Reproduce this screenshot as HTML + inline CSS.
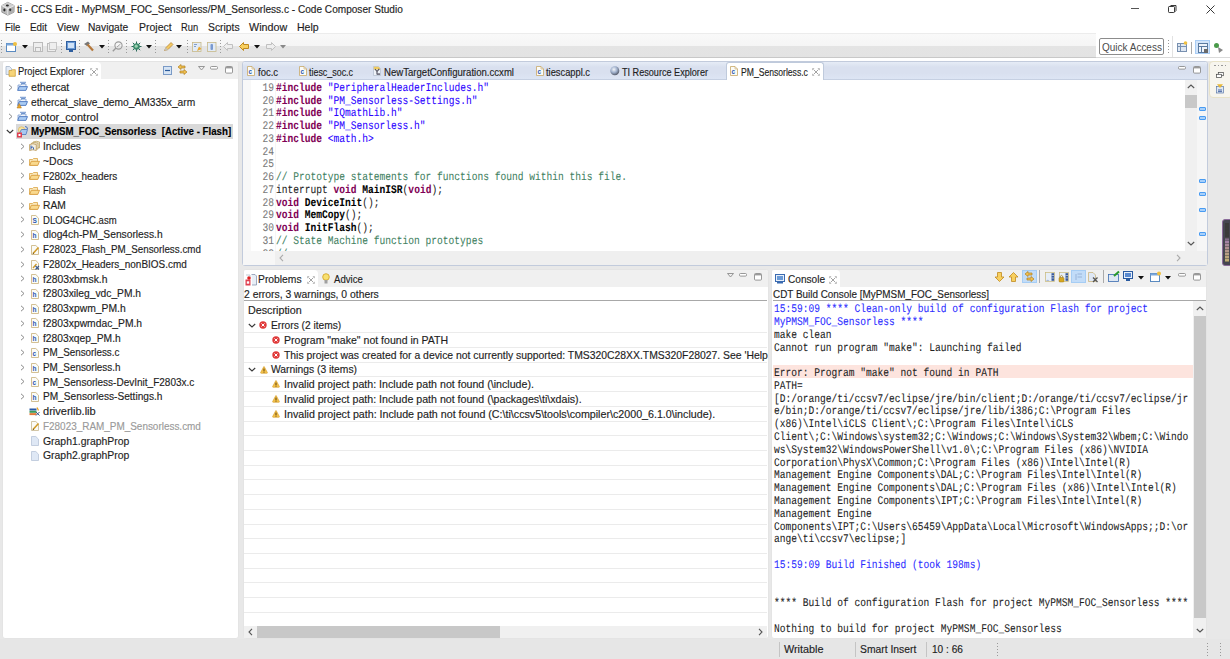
<!DOCTYPE html><html><head><meta charset="utf-8"><style>
*{margin:0;padding:0;box-sizing:border-box}
html,body{width:1230px;height:659px;overflow:hidden;background:#e8e8e8;font-family:"Liberation Sans",sans-serif;font-size:10.5px;color:#1e1e1e}
.a{position:absolute}
.t{position:absolute;white-space:pre;line-height:14px;-webkit-text-stroke:0.15px currentColor}
.m{position:absolute;white-space:pre;line-height:13px;font-family:"Liberation Mono",monospace;font-size:9.6px;color:#222;transform:scale(0.9994,1.22);transform-origin:0 9.06px;-webkit-text-stroke:0.06px currentColor;text-rendering:geometricPrecision}
.kw{color:#7f0055;font-weight:bold}
.st{color:#2a00ff}
.cm{color:#3f7f5f}
.fn{font-weight:bold;color:#000}
.bl{color:#1a1aff}
svg{position:absolute;overflow:visible}
</style></head><body><div class="a" style="left:0px;top:0px;width:1230px;height:18px;background:#fff"></div><div class="t" style="left:17.00px;top:2.36px;transform:scaleX(0.9610);transform-origin:0 0;">ti - CCS Edit - MyPMSM_FOC_Sensorless/PM_Sensorless.c - Code Composer Studio</div><svg style="left:0px;top:0px" width="16" height="17"><path d="M7.8 2.3 L14.2 5.6 L14 12.2 L7.8 15.2 L1.8 12.2 L1.8 5.6Z" fill="#bdbdbd" stroke="#8a8a8a" stroke-width="0.8"/><path d="M7.8 2.3 L14.2 5.6 L7.8 8.8 L1.8 5.6Z" fill="#cfcfcf"/><path d="M7.8 8.8 L14.2 5.6 L14 12.2 L7.8 15.2Z" fill="#b0b0b0"/><path d="M1.8 5.6 L7.8 8.8 V15.2 M7.8 8.8 L14.2 5.6" fill="none" stroke="#f4f4f4" stroke-width="0.8"/><ellipse cx="7.4" cy="5.4" rx="1.5" ry="1" fill="#2a2a2a"/><ellipse cx="4.4" cy="10" rx="1.1" ry="1.4" fill="#2a2a2a"/><ellipse cx="10.2" cy="9.8" rx="1.1" ry="1.4" fill="#3a3a3a"/></svg><div class="a" style="left:1131px;top:8px;width:8px;height:1px;background:#555"></div><svg style="left:1167.5px;top:5px" width="9" height="8"><rect x="0.5" y="1.5" width="6" height="6" fill="none" stroke="#222" stroke-width="0.9" rx="0.8"/><path d="M1.8 1.5 L2.8 0.5 H8 V5.5 L6.5 7" fill="none" stroke="#222" stroke-width="0.9"/></svg><svg style="left:1205.5px;top:5px" width="9" height="9"><path d="M0.5 0.5 L8.5 8.5 M8.5 0.5 L0.5 8.5" stroke="#222" stroke-width="0.9"/></svg><div class="a" style="left:0px;top:18px;width:1230px;height:16px;background:#fff"></div><div class="t" style="left:4.90px;top:19.56px;transform:scaleX(0.9043);transform-origin:0 0;">File</div><div class="t" style="left:29.90px;top:19.56px;transform:scaleX(0.9341);transform-origin:0 0;">Edit</div><div class="t" style="left:56.60px;top:19.56px;transform:scaleX(0.9792);transform-origin:0 0;">View</div><div class="t" style="left:88.40px;top:19.56px;transform:scaleX(0.9725);transform-origin:0 0;">Navigate</div><div class="t" style="left:138.90px;top:19.56px;transform:scaleX(0.9976);transform-origin:0 0;">Project</div><div class="t" style="left:181.20px;top:19.56px;transform:scaleX(0.8878);transform-origin:0 0;">Run</div><div class="t" style="left:207.70px;top:19.56px;transform:scaleX(0.9847);transform-origin:0 0;">Scripts</div><div class="t" style="left:248.70px;top:19.56px;transform:scaleX(1.0229);transform-origin:0 0;">Window</div><div class="t" style="left:296.70px;top:19.56px;transform:scaleX(1.0002);transform-origin:0 0;">Help</div><div class="a" style="left:0px;top:33px;width:1096px;height:25px;background:linear-gradient(#f9f9f9 0,#f5f5f5 50%,#e4e4e4 54%,#e3e3e3 100%);border-top:1px solid #ececec;border-bottom:1px solid #c8c8c8"></div><div class="a" style="left:1096px;top:33px;width:134px;height:25px;background:#fff"></div><div class="a" style="left:0px;top:58px;width:1230px;height:3px;background:#fff"></div><div class="a" style="left:1px;top:40px;width:1px;height:14px;background:repeating-linear-gradient(#9a9a9a 0 1px,transparent 1px 3px)"></div><div class="a" style="left:61px;top:40px;width:1px;height:14px;background:repeating-linear-gradient(#9a9a9a 0 1px,transparent 1px 3px)"></div><div class="a" style="left:79px;top:40px;width:1px;height:14px;background:repeating-linear-gradient(#9a9a9a 0 1px,transparent 1px 3px)"></div><div class="a" style="left:108px;top:40px;width:1px;height:14px;background:repeating-linear-gradient(#9a9a9a 0 1px,transparent 1px 3px)"></div><div class="a" style="left:126px;top:40px;width:1px;height:14px;background:repeating-linear-gradient(#9a9a9a 0 1px,transparent 1px 3px)"></div><div class="a" style="left:155px;top:40px;width:1px;height:14px;background:repeating-linear-gradient(#9a9a9a 0 1px,transparent 1px 3px)"></div><div class="a" style="left:187px;top:40px;width:1px;height:14px;background:repeating-linear-gradient(#9a9a9a 0 1px,transparent 1px 3px)"></div><div class="a" style="left:220px;top:40px;width:1px;height:14px;background:repeating-linear-gradient(#9a9a9a 0 1px,transparent 1px 3px)"></div><svg style="left:6px;top:42px" width="11" height="10"><rect x="0.5" y="1.5" width="9" height="8" fill="#fff" stroke="#5a8ac0"/><rect x="0.5" y="1.5" width="9" height="2" fill="#7aa7dc"/><circle cx="9" cy="2" r="2" fill="#f0c040"/></svg><svg style="left:22px;top:45px" width="6" height="4"><path d="M0 0 H6 L3 3.5Z" fill="#111"/></svg><svg style="left:33px;top:42px" width="10" height="10"><rect x="0.5" y="0.5" width="9" height="9" fill="#eee" stroke="#bbb"/><rect x="2.5" y="5.5" width="5" height="4" fill="none" stroke="#bbb"/></svg><svg style="left:47px;top:42px" width="10" height="10"><rect x="0.5" y="1.5" width="8" height="8" fill="#eee" stroke="#bbb"/><rect x="2.5" y="0.5" width="7" height="7" fill="#eee" stroke="#c6c6c6"/></svg><svg style="left:66px;top:41px" width="10" height="11"><rect x="0.5" y="0.5" width="9" height="8" fill="#6a9ad6" stroke="#2f5f9f"/><rect x="2" y="2" width="6" height="5" fill="#cfe2f7"/><rect x="3" y="9" width="4" height="2" fill="#2f5f9f"/></svg><svg style="left:83px;top:41px" width="11" height="11"><path d="M1 3 L5 0.5 L7 2.5 L4 5Z" fill="#777"/><path d="M4.5 3.5 L10 9.5" stroke="#b4773a" stroke-width="2.2"/></svg><svg style="left:99px;top:45px" width="6" height="4"><path d="M0 0 H6 L3 3.5Z" fill="#111"/></svg><svg style="left:112px;top:41px" width="11" height="11"><circle cx="6.5" cy="4.5" r="3.6" fill="none" stroke="#9a9a9a" stroke-width="1.1"/><path d="M4 7 L0.8 10.2" stroke="#9a9a9a" stroke-width="1.3"/><path d="M5 6 L8.5 3" stroke="#9a9a9a" stroke-width="0.9"/></svg><svg style="left:131px;top:41px" width="11" height="11"><path d="M5.5 0.5 V10.5 M0.5 5.5 H10.5 M1.8 1.8 L9.2 9.2 M9.2 1.8 L1.8 9.2" stroke="#2a6a5a" stroke-width="1"/><circle cx="5.5" cy="5.5" r="3.3" fill="#3a8a6a"/><circle cx="5.2" cy="5.2" r="1.6" fill="#9ad0b0"/></svg><svg style="left:146px;top:45px" width="6" height="4"><path d="M0 0 H6 L3 3.5Z" fill="#111"/></svg><svg style="left:163px;top:41px" width="11" height="11"><path d="M1.5 9.5 L3 6.5 L8 1.5 L10 3.5 L5 8.5Z" fill="#f3c860" stroke="#b08030" stroke-width="0.7"/><path d="M3 6.5 L5 8.5 L4 9.5 L1.5 9.5 L2 7.5Z" fill="#c8c0b0"/></svg><svg style="left:176px;top:45px" width="6" height="4"><path d="M0 0 H6 L3 3.5Z" fill="#111"/></svg><svg style="left:192px;top:41.5px" width="10" height="10"><rect x="0.5" y="0.5" width="8.5" height="9" fill="#e2ebf6" stroke="#c8b888" stroke-width="0.8"/><path d="M2 2.5 H5 M2 4.5 H4" stroke="#6a8ac0" stroke-width="0.8"/><path d="M5 9 L7 4.5 L9.5 7Z" fill="#e8a830"/></svg><svg style="left:207px;top:41.5px" width="10" height="10"><rect x="0.5" y="0.5" width="8.5" height="9" fill="#e2ebf6" stroke="#c8b888" stroke-width="0.8"/><rect x="3.5" y="2" width="2.5" height="6" fill="#7a9ad0" rx="1"/></svg><svg style="left:223px;top:42px" width="10" height="9"><path d="M0.5 4.5 L4.5 0.5 V2.5 H9.5 V6.5 H4.5 V8.5Z" fill="#eee" stroke="#c0c0c0"/></svg><svg style="left:239px;top:42px" width="10" height="9"><path d="M0.5 4.5 L4.5 0.5 V2.5 H9.5 V6.5 H4.5 V8.5Z" fill="#f8d060" stroke="#c08a20"/></svg><svg style="left:254px;top:45px" width="6" height="4"><path d="M0 0 H6 L3 3.5Z" fill="#111"/></svg><svg style="left:266px;top:42px" width="10" height="9"><path d="M9.5 4.5 L5.5 0.5 V2.5 H0.5 V6.5 H5.5 V8.5Z" fill="#eee" stroke="#c0c0c0"/></svg><svg style="left:280px;top:45px" width="6" height="4"><path d="M0 0 H6 L3 3.5Z" fill="#888"/></svg><div class="a" style="left:1099px;top:38px;width:65px;height:17px;border:1px solid #8c8c8c;border-radius:2px;background:#fff"></div><div class="a" style="left:1096px;top:57px;width:134px;height:1px;background:#dadada"></div><div class="a" style="left:1172px;top:36px;width:1px;height:21px;background:#e2e2e2"></div><div class="t" style="left:1101.90px;top:39.86px;transform:scaleX(0.9505);transform-origin:0 0;color:#4a4a4a;-webkit-text-stroke:0;">Quick Access</div><div class="a" style="left:1168px;top:40px;width:1px;height:14px;background:repeating-linear-gradient(#9a9a9a 0 1px,transparent 1px 3px)"></div><svg style="left:1177px;top:41px" width="11" height="11"><rect x="0.5" y="2.5" width="9" height="8" fill="#dfe8f3" stroke="#7890b0"/><path d="M0.5 5.5 H9.5 M3.5 2.5 V10.5" stroke="#7890b0"/><circle cx="8.5" cy="2" r="1.8" fill="#f0c040"/></svg><div class="a" style="left:1191px;top:42px;width:1px;height:12px;background:#aaa"></div><div class="a" style="left:1195px;top:40px;width:15px;height:14px;background:#d3e5fa;border:1px solid #a9cdf5"></div><svg style="left:1198px;top:43px" width="11" height="11"><rect x="0.5" y="0.5" width="9" height="9" fill="#eef3fa" stroke="#5a7aa0"/><path d="M0.5 3.5 H9.5 M3.5 3.5 V9.5" stroke="#5a7aa0"/><rect x="6" y="6" width="4" height="4" fill="#6a6a6a"/></svg><svg style="left:1213px;top:42px" width="12" height="12"><circle cx="3.5" cy="3.5" r="2.5" fill="#4a9a4a"/><path d="M5 5 L10 8 L6 11Z" fill="#888"/></svg><div class="a" style="left:2px;top:61px;width:237px;height:578px;background:#fff;border:1px solid #e4e4e4;border-radius:3px"></div><div class="a" style="left:3px;top:62px;width:235px;height:17px;background:#f0f0f0;border-radius:2px 2px 0 0"></div><div class="a" style="left:3px;top:62px;width:98px;height:17px;background:#fff;border-radius:2px 4px 0 0"></div><svg style="left:4.5px;top:65.5px" width="11" height="11"><path d="M1 0.5 H4.5 L6.5 2.5 V8.5 H1Z" fill="#e4ebf5" stroke="#9aaac0" stroke-width="0.7"/><path d="M4 4.5 H6.5 L7.3 3.7 H10.3 V10.3 H4Z" fill="#f7d57a" stroke="#c8982e" stroke-width="0.7"/></svg><div class="t" style="left:17.60px;top:64.16px;transform:scaleX(0.8916);transform-origin:0 0;">Project Explorer</div><svg style="left:89.5px;top:67.5px" width="8" height="8"><path d="M1.5 1.5 L6.5 6.5 M6.5 1.5 L1.5 6.5" stroke="#9a9a9a" stroke-width="0.9"/><path d="M0.5 2.2 V0.5 H2.2 M5.8 0.5 H7.5 V2.2 M7.5 5.8 V7.5 H5.8 M2.2 7.5 H0.5 V5.8" fill="none" stroke="#b0b0b0" stroke-width="0.8"/></svg><svg style="left:163px;top:66px" width="10" height="10"><rect x="0.5" y="0.5" width="8" height="8" fill="#d6e4f4" stroke="#7a9ac6"/><path d="M2 4.5 H7" stroke="#2a5a9a" stroke-width="1.2"/></svg><svg style="left:177px;top:64px" width="11" height="11"><path d="M1 3 L4 0.5 V2 H8 V4 H4 V5.5Z" fill="#f0c050" stroke="#b08020" stroke-width="0.7"/><path d="M10 8 L7 10.5 V9 H3 V7 H7 V5.5Z" fill="#f0c050" stroke="#b08020" stroke-width="0.7"/></svg><svg style="left:197.6px;top:66px" width="7" height="5"><path d="M0.5 0.5 H6.5 L3.5 4Z" fill="none" stroke="#8c8c8c" stroke-width="0.9"/></svg><svg style="left:210px;top:66px" width="8" height="4"><rect x="0.5" y="0.5" width="7" height="2.6" fill="#fff" stroke="#8c8c8c" stroke-width="0.9" rx="1"/></svg><svg style="left:224.7px;top:66px" width="8" height="8"><rect x="0.5" y="0.5" width="7" height="6.6" fill="#fff" stroke="#8c8c8c" stroke-width="0.9" rx="1"/><rect x="1" y="1" width="6" height="1.4" fill="#9a9a9a"/></svg><svg style="left:8px;top:84.0px" width="5" height="7"><path d="M1 0.8 L4 3.5 L1 6.2" fill="none" stroke="#8a8a8a" stroke-width="1"/></svg><svg style="left:17px;top:82.10px" width="11" height="9"><path d="M1 3 H4 L5 2 H9 V7.5 H1Z" fill="#eef3fb" stroke="#6a90c8" stroke-width="0.7"/><path d="M0.6 8.4 L2.2 4.6 H10.5 L8.9 8.4Z" fill="#a9cbf3" stroke="#3a68b8" stroke-width="0.8"/><path d="M3 0.3 H9 M4 1.6 H8" stroke="#4a78c0" stroke-width="0.8"/></svg><div class="t" style="left:30.50px;top:80.26px;transform:scaleX(1.0095);transform-origin:0 0;">ethercat</div><svg style="left:8px;top:98.72px" width="5" height="7"><path d="M1 0.8 L4 3.5 L1 6.2" fill="none" stroke="#8a8a8a" stroke-width="1"/></svg><svg style="left:17px;top:96.82px" width="11" height="9"><path d="M1 3 H4 L5 2 H9 V7.5 H1Z" fill="#eef3fb" stroke="#6a90c8" stroke-width="0.7"/><path d="M0.6 8.4 L2.2 4.6 H10.5 L8.9 8.4Z" fill="#a9cbf3" stroke="#3a68b8" stroke-width="0.8"/><path d="M3 0.3 H9 M4 1.6 H8" stroke="#4a78c0" stroke-width="0.8"/><path d="M0 11 L2.2 6.5 L4.4 11Z" fill="#e8a830" stroke="#b07010" stroke-width="0.5"/></svg><div class="t" style="left:30.50px;top:94.98px;transform:scaleX(0.9735);transform-origin:0 0;">ethercat_slave_demo_AM335x_arm</div><svg style="left:8px;top:113.44px" width="5" height="7"><path d="M1 0.8 L4 3.5 L1 6.2" fill="none" stroke="#8a8a8a" stroke-width="1"/></svg><svg style="left:17px;top:111.54px" width="11" height="9"><path d="M1 3 H4 L5 2 H9 V7.5 H1Z" fill="#eef3fb" stroke="#6a90c8" stroke-width="0.7"/><path d="M0.6 8.4 L2.2 4.6 H10.5 L8.9 8.4Z" fill="#a9cbf3" stroke="#3a68b8" stroke-width="0.8"/><path d="M3 0.3 H9 M4 1.6 H8" stroke="#4a78c0" stroke-width="0.8"/></svg><div class="t" style="left:30.50px;top:109.70px;transform:scaleX(1.0499);transform-origin:0 0;">motor_control</div><div class="a" style="left:16px;top:124.36px;width:217px;height:14.7px;background:#d9d9d9"></div><svg style="left:6px;top:129.16px" width="8" height="5"><path d="M0.8 1 L4 4 L7.2 1" fill="none" stroke="#3a3a3a" stroke-width="1.1"/></svg><svg style="left:17px;top:126.16px" width="11" height="12"><circle cx="4.5" cy="4" r="3.2" fill="#f7e3a0" stroke="#d8b050" stroke-width="0.6"/><path d="M3 6 L4.5 3.5 H10.5 L9 8.5 H3Z" fill="#a8c8f0" stroke="#3a68b8" stroke-width="0.7"/><path d="M8 0.5 Q10.5 0.5 10.5 3" fill="none" stroke="#3a68b8" stroke-width="0.9"/><rect x="0" y="6.5" width="5" height="5" fill="#e04050"/><rect x="1.5" y="8" width="2" height="2" fill="#fff"/></svg><div class="t" style="left:30.50px;top:124.42px;transform:scaleX(0.9219);transform-origin:0 0;font-weight:bold;color:#000;">MyPMSM_FOC_Sensorless  [Active - Flash]</div><svg style="left:20px;top:142.88px" width="5" height="7"><path d="M1 0.8 L4 3.5 L1 6.2" fill="none" stroke="#8a8a8a" stroke-width="1"/></svg><svg style="left:29px;top:141.38px" width="11" height="10"><path d="M4 1 Q7.5 -0.5 10.5 1 V7 Q7.5 5.5 4 7Z" fill="#eee6d0" stroke="#b89a50" stroke-width="0.7"/><path d="M2.5 2.2 Q6 0.8 9 2.2 V8.2 Q6 6.8 2.5 8.2Z" fill="#efe8d6" stroke="#b89a50" stroke-width="0.7"/><path d="M0.6 3.5 Q4 2 7.3 3.5 V9.5 Q4 8 0.6 9.5Z" fill="#f4eedf" stroke="#b08a40" stroke-width="0.7"/><path d="M2 4.5 V8.5 M2 6.5 Q4 5 4.5 7 V8.5" fill="none" stroke="#2a58b0" stroke-width="0.9"/></svg><div class="t" style="left:42.50px;top:139.14px;transform:scaleX(0.9691);transform-origin:0 0;">Includes</div><svg style="left:20px;top:157.6px" width="5" height="7"><path d="M1 0.8 L4 3.5 L1 6.2" fill="none" stroke="#8a8a8a" stroke-width="1"/></svg><svg style="left:29px;top:157.70px" width="11" height="8"><path d="M0.5 1.5 H3.5 L4.5 0.5 H8.5 V7 H0.5Z" fill="#fbe9bb" stroke="#d9a448" stroke-width="0.8"/><path d="M0.6 7.4 L2.3 3.3 H10.5 L8.8 7.4Z" fill="#f9d98e" stroke="#d39433" stroke-width="0.8"/></svg><div class="t" style="left:42.50px;top:153.86px;transform:scaleX(0.9949);transform-origin:0 0;">~Docs</div><svg style="left:20px;top:172.32000000000002px" width="5" height="7"><path d="M1 0.8 L4 3.5 L1 6.2" fill="none" stroke="#8a8a8a" stroke-width="1"/></svg><svg style="left:29px;top:172.42px" width="11" height="8"><path d="M0.5 1.5 H3.5 L4.5 0.5 H8.5 V7 H0.5Z" fill="#fbe9bb" stroke="#d9a448" stroke-width="0.8"/><path d="M0.6 7.4 L2.3 3.3 H10.5 L8.8 7.4Z" fill="#f9d98e" stroke="#d39433" stroke-width="0.8"/></svg><div class="t" style="left:42.50px;top:168.58px;transform:scaleX(0.9428);transform-origin:0 0;">F2802x_headers</div><svg style="left:20px;top:187.04px" width="5" height="7"><path d="M1 0.8 L4 3.5 L1 6.2" fill="none" stroke="#8a8a8a" stroke-width="1"/></svg><svg style="left:29px;top:187.14px" width="11" height="8"><path d="M0.5 1.5 H3.5 L4.5 0.5 H8.5 V7 H0.5Z" fill="#fbe9bb" stroke="#d9a448" stroke-width="0.8"/><path d="M0.6 7.4 L2.3 3.3 H10.5 L8.8 7.4Z" fill="#f9d98e" stroke="#d39433" stroke-width="0.8"/></svg><div class="t" style="left:42.50px;top:183.30px;transform:scaleX(0.8880);transform-origin:0 0;">Flash</div><svg style="left:20px;top:201.76000000000002px" width="5" height="7"><path d="M1 0.8 L4 3.5 L1 6.2" fill="none" stroke="#8a8a8a" stroke-width="1"/></svg><svg style="left:29px;top:201.86px" width="11" height="8"><path d="M0.5 1.5 H3.5 L4.5 0.5 H8.5 V7 H0.5Z" fill="#fbe9bb" stroke="#d9a448" stroke-width="0.8"/><path d="M0.6 7.4 L2.3 3.3 H10.5 L8.8 7.4Z" fill="#f9d98e" stroke="#d39433" stroke-width="0.8"/></svg><div class="t" style="left:42.50px;top:198.02px;transform:scaleX(0.9772);transform-origin:0 0;">RAM</div><svg style="left:20px;top:216.48000000000002px" width="5" height="7"><path d="M1 0.8 L4 3.5 L1 6.2" fill="none" stroke="#8a8a8a" stroke-width="1"/></svg><svg style="left:30.5px;top:215.38px" width="9" height="10"><path d="M0.5 0.5 H4.8 L7.5 3.2 V9.5 H0.5Z" fill="#fbfbf7" stroke="#c8b07a" stroke-width="0.8"/><text x="1.6" y="7.6" font-size="6.5" fill="#2a58b0" font-family="Liberation Sans" font-weight="bold">S</text></svg><div class="t" style="left:42.50px;top:212.74px;transform:scaleX(0.9075);transform-origin:0 0;">DLOG4CHC.asm</div><svg style="left:20px;top:231.20000000000002px" width="5" height="7"><path d="M1 0.8 L4 3.5 L1 6.2" fill="none" stroke="#8a8a8a" stroke-width="1"/></svg><svg style="left:30.5px;top:230.10px" width="9" height="10"><path d="M0.5 0.5 H4.8 L7.5 3.2 V9.5 H0.5Z" fill="#fbfbf7" stroke="#c8b07a" stroke-width="0.8"/><text x="1.6" y="7.6" font-size="6.5" fill="#2a58b0" font-family="Liberation Sans" font-weight="bold">h</text></svg><div class="t" style="left:42.50px;top:227.46px;transform:scaleX(0.9758);transform-origin:0 0;">dlog4ch-PM_Sensorless.h</div><svg style="left:20px;top:245.92000000000002px" width="5" height="7"><path d="M1 0.8 L4 3.5 L1 6.2" fill="none" stroke="#8a8a8a" stroke-width="1"/></svg><svg style="left:30.5px;top:244.82px" width="9" height="10"><path d="M0.5 0.5 H4.8 L7.5 3.2 V9.5 H0.5Z" fill="#fbfbf7" stroke="#c8b07a" stroke-width="0.8"/><path d="M2 8.5 L7.5 2.5" stroke="#d09a28" stroke-width="1.6"/><path d="M1.5 9.3 L2.2 7.6 L3.2 8.6Z" fill="#6a5020"/></svg><div class="t" style="left:42.50px;top:242.18px;transform:scaleX(0.9329);transform-origin:0 0;">F28023_Flash_PM_Sensorless.cmd</div><svg style="left:20px;top:260.64000000000004px" width="5" height="7"><path d="M1 0.8 L4 3.5 L1 6.2" fill="none" stroke="#8a8a8a" stroke-width="1"/></svg><svg style="left:30.5px;top:259.54px" width="9" height="10"><path d="M0.5 0.5 H4.8 L7.5 3.2 V9.5 H0.5Z" fill="#fbfbf7" stroke="#c8b07a" stroke-width="0.8"/><path d="M2 8 L5.5 4" stroke="#d09a28" stroke-width="1.4"/><path d="M4.5 6 L8 9.5 M8 6 L4.5 9.5" stroke="#3a5a90" stroke-width="1.1"/></svg><div class="t" style="left:42.50px;top:256.90px;transform:scaleX(0.9469);transform-origin:0 0;">F2802x_Headers_nonBIOS.cmd</div><svg style="left:20px;top:275.36px" width="5" height="7"><path d="M1 0.8 L4 3.5 L1 6.2" fill="none" stroke="#8a8a8a" stroke-width="1"/></svg><svg style="left:30.5px;top:274.26px" width="9" height="10"><path d="M0.5 0.5 H4.8 L7.5 3.2 V9.5 H0.5Z" fill="#fbfbf7" stroke="#c8b07a" stroke-width="0.8"/><text x="1.6" y="7.6" font-size="6.5" fill="#2a58b0" font-family="Liberation Sans" font-weight="bold">h</text></svg><div class="t" style="left:42.50px;top:271.62px;transform:scaleX(0.9867);transform-origin:0 0;">f2803xbmsk.h</div><svg style="left:20px;top:290.08000000000004px" width="5" height="7"><path d="M1 0.8 L4 3.5 L1 6.2" fill="none" stroke="#8a8a8a" stroke-width="1"/></svg><svg style="left:30.5px;top:288.98px" width="9" height="10"><path d="M0.5 0.5 H4.8 L7.5 3.2 V9.5 H0.5Z" fill="#fbfbf7" stroke="#c8b07a" stroke-width="0.8"/><text x="1.6" y="7.6" font-size="6.5" fill="#2a58b0" font-family="Liberation Sans" font-weight="bold">h</text></svg><div class="t" style="left:42.50px;top:286.34px;transform:scaleX(0.9761);transform-origin:0 0;">f2803xileg_vdc_PM.h</div><svg style="left:20px;top:304.80000000000007px" width="5" height="7"><path d="M1 0.8 L4 3.5 L1 6.2" fill="none" stroke="#8a8a8a" stroke-width="1"/></svg><svg style="left:30.5px;top:303.70px" width="9" height="10"><path d="M0.5 0.5 H4.8 L7.5 3.2 V9.5 H0.5Z" fill="#fbfbf7" stroke="#c8b07a" stroke-width="0.8"/><text x="1.6" y="7.6" font-size="6.5" fill="#2a58b0" font-family="Liberation Sans" font-weight="bold">h</text></svg><div class="t" style="left:42.50px;top:301.06px;transform:scaleX(0.9840);transform-origin:0 0;">f2803xpwm_PM.h</div><svg style="left:20px;top:319.52000000000004px" width="5" height="7"><path d="M1 0.8 L4 3.5 L1 6.2" fill="none" stroke="#8a8a8a" stroke-width="1"/></svg><svg style="left:30.5px;top:318.42px" width="9" height="10"><path d="M0.5 0.5 H4.8 L7.5 3.2 V9.5 H0.5Z" fill="#fbfbf7" stroke="#c8b07a" stroke-width="0.8"/><text x="1.6" y="7.6" font-size="6.5" fill="#2a58b0" font-family="Liberation Sans" font-weight="bold">h</text></svg><div class="t" style="left:42.50px;top:315.78px;transform:scaleX(0.9815);transform-origin:0 0;">f2803xpwmdac_PM.h</div><svg style="left:20px;top:334.24px" width="5" height="7"><path d="M1 0.8 L4 3.5 L1 6.2" fill="none" stroke="#8a8a8a" stroke-width="1"/></svg><svg style="left:30.5px;top:333.14px" width="9" height="10"><path d="M0.5 0.5 H4.8 L7.5 3.2 V9.5 H0.5Z" fill="#fbfbf7" stroke="#c8b07a" stroke-width="0.8"/><text x="1.6" y="7.6" font-size="6.5" fill="#2a58b0" font-family="Liberation Sans" font-weight="bold">h</text></svg><div class="t" style="left:42.50px;top:330.50px;transform:scaleX(0.9787);transform-origin:0 0;">f2803xqep_PM.h</div><svg style="left:20px;top:348.96000000000004px" width="5" height="7"><path d="M1 0.8 L4 3.5 L1 6.2" fill="none" stroke="#8a8a8a" stroke-width="1"/></svg><svg style="left:30.5px;top:347.86px" width="9" height="10"><path d="M0.5 0.5 H4.8 L7.5 3.2 V9.5 H0.5Z" fill="#fbfbf7" stroke="#c8b07a" stroke-width="0.8"/><text x="1.6" y="7.6" font-size="6.5" fill="#2a58b0" font-family="Liberation Sans" font-weight="bold">c</text></svg><div class="t" style="left:42.50px;top:345.22px;transform:scaleX(0.9351);transform-origin:0 0;">PM_Sensorless.c</div><svg style="left:20px;top:363.68000000000006px" width="5" height="7"><path d="M1 0.8 L4 3.5 L1 6.2" fill="none" stroke="#8a8a8a" stroke-width="1"/></svg><svg style="left:30.5px;top:362.58px" width="9" height="10"><path d="M0.5 0.5 H4.8 L7.5 3.2 V9.5 H0.5Z" fill="#fbfbf7" stroke="#c8b07a" stroke-width="0.8"/><text x="1.6" y="7.6" font-size="6.5" fill="#2a58b0" font-family="Liberation Sans" font-weight="bold">h</text></svg><div class="t" style="left:42.50px;top:359.94px;transform:scaleX(0.9418);transform-origin:0 0;">PM_Sensorless.h</div><svg style="left:20px;top:378.4000000000001px" width="5" height="7"><path d="M1 0.8 L4 3.5 L1 6.2" fill="none" stroke="#8a8a8a" stroke-width="1"/></svg><svg style="left:30.5px;top:377.30px" width="9" height="10"><path d="M0.5 0.5 H4.8 L7.5 3.2 V9.5 H0.5Z" fill="#fbfbf7" stroke="#c8b07a" stroke-width="0.8"/><text x="1.6" y="7.6" font-size="6.5" fill="#2a58b0" font-family="Liberation Sans" font-weight="bold">c</text></svg><div class="t" style="left:42.50px;top:374.66px;transform:scaleX(0.9532);transform-origin:0 0;">PM_Sensorless-DevInit_F2803x.c</div><svg style="left:20px;top:393.12px" width="5" height="7"><path d="M1 0.8 L4 3.5 L1 6.2" fill="none" stroke="#8a8a8a" stroke-width="1"/></svg><svg style="left:30.5px;top:392.02px" width="9" height="10"><path d="M0.5 0.5 H4.8 L7.5 3.2 V9.5 H0.5Z" fill="#fbfbf7" stroke="#c8b07a" stroke-width="0.8"/><text x="1.6" y="7.6" font-size="6.5" fill="#2a58b0" font-family="Liberation Sans" font-weight="bold">h</text></svg><div class="t" style="left:42.50px;top:389.38px;transform:scaleX(0.9659);transform-origin:0 0;">PM_Sensorless-Settings.h</div><svg style="left:29px;top:406.74px" width="11" height="9"><rect x="0.5" y="1.5" width="7" height="2" fill="#2a5aa8"/><rect x="0.5" y="3.8" width="7" height="2" fill="#3a9a5a"/><rect x="0.5" y="6.1" width="7" height="2" fill="#e07a3a"/><path d="M8 0.5 L9.5 3.5" stroke="#e8a020" stroke-width="1.2"/><path d="M7 5 L10.5 8.5 M10.5 5 L7 8.5" stroke="#3a5a90" stroke-width="1"/></svg><div class="t" style="left:42.50px;top:404.10px;transform:scaleX(1.0502);transform-origin:0 0;">driverlib.lib</div><svg style="left:30.5px;top:421.46px" width="9" height="10"><path d="M0.5 0.5 H4.8 L7.5 3.2 V9.5 H0.5Z" fill="#fbfbf7" stroke="#c8b890" stroke-width="0.8"/><path d="M2 8.5 L7.5 2.5" stroke="#d09a28" stroke-width="1.6"/><path d="M1.5 9.3 L2.2 7.6 L3.2 8.6Z" fill="#6a5020"/></svg><div class="t" style="left:42.50px;top:418.82px;transform:scaleX(0.9460);transform-origin:0 0;color:#9a9a9a;">F28023_RAM_PM_Sensorless.cmd</div><svg style="left:30.5px;top:436.18px" width="9" height="10"><path d="M0.5 0.5 H4.8 L7.5 3.2 V9.5 H0.5Z" fill="#dfe8f5" stroke="#b8c4d8" stroke-width="0.8"/></svg><div class="t" style="left:42.50px;top:433.54px;transform:scaleX(0.9922);transform-origin:0 0;">Graph1.graphProp</div><svg style="left:30.5px;top:450.90px" width="9" height="10"><path d="M0.5 0.5 H4.8 L7.5 3.2 V9.5 H0.5Z" fill="#dfe8f5" stroke="#b8c4d8" stroke-width="0.8"/></svg><div class="t" style="left:42.50px;top:448.26px;transform:scaleX(0.9922);transform-origin:0 0;">Graph2.graphProp</div><div class="a" style="left:242px;top:61px;width:966px;height:205px;background:#fff;border:1px solid #c2cbdc;border-radius:3px"></div><div class="a" style="left:243px;top:62px;width:964px;height:18px;background:linear-gradient(#e6ecf6 0,#d9e0ef 30%,#d9e0ef 65%,#dde5f4 100%);border-bottom:1px solid #c6d0e2;border-radius:2px 2px 0 0"></div><div class="a" style="left:726px;top:62px;width:98px;height:18px;background:#fff;border:1px solid #bfcadc;border-bottom:none;border-radius:3px 3px 0 0"></div><svg style="left:247px;top:66px" width="8" height="10"><path d="M0.5 0.5 H5 L7.5 3 V9.5 H0.5Z" fill="#fbfbf7" stroke="#c8a868" stroke-width="0.8"/><path d="M5 0.5 V3 H7.5" fill="none" stroke="#c8a868" stroke-width="0.6"/><text x="1.6" y="7.8" font-size="6.5" fill="#2a5ab0" font-family="Liberation Sans" font-weight="bold">c</text></svg><div class="t" style="left:258.00px;top:64.56px;transform:scaleX(0.9020);transform-origin:0 0;">foc.c</div><svg style="left:298.5px;top:66px" width="8" height="10"><path d="M0.5 0.5 H5 L7.5 3 V9.5 H0.5Z" fill="#fbfbf7" stroke="#c8a868" stroke-width="0.8"/><path d="M5 0.5 V3 H7.5" fill="none" stroke="#c8a868" stroke-width="0.6"/><text x="1.6" y="7.8" font-size="6.5" fill="#2a5ab0" font-family="Liberation Sans" font-weight="bold">c</text></svg><div class="t" style="left:309.00px;top:64.56px;transform:scaleX(0.8472);transform-origin:0 0;">tiesc_soc.c</div><svg style="left:373px;top:66.3px" width="9" height="10"><path d="M0.5 0.5 H5.5 L7.5 2.5 V9.5 H0.5Z" fill="#eef2f8" stroke="#b0bccc" stroke-width="0.7"/><path d="M0.8 0.8 H5.5 L7.2 2.5 V3.5 H0.8Z" fill="#f0cc60"/><path d="M2 3 L4 5.5 L6.3 2.8 M4 5.5 V8.5" stroke="#4a4a58" stroke-width="1.1" fill="none"/><rect x="4" y="7.3" width="3" height="1.6" fill="#6a6a78"/></svg><div class="t" style="left:384.00px;top:64.56px;transform:scaleX(0.9130);transform-origin:0 0;">NewTargetConfiguration.ccxml</div><svg style="left:535.7px;top:66px" width="8" height="10"><path d="M0.5 0.5 H5 L7.5 3 V9.5 H0.5Z" fill="#fbfbf7" stroke="#c8a868" stroke-width="0.8"/><path d="M5 0.5 V3 H7.5" fill="none" stroke="#c8a868" stroke-width="0.6"/><text x="1.6" y="7.8" font-size="6.5" fill="#2a5ab0" font-family="Liberation Sans" font-weight="bold">c</text></svg><div class="t" style="left:546.00px;top:64.56px;transform:scaleX(0.8869);transform-origin:0 0;">tiescappl.c</div><svg style="left:609.5px;top:66.3px" width="10" height="10"><defs><radialGradient id="gl" cx="0.4" cy="0.35" r="0.7"><stop offset="0" stop-color="#f4f6fa"/><stop offset="0.5" stop-color="#9fb0cc"/><stop offset="1" stop-color="#4a4e5a"/></radialGradient></defs><circle cx="4.8" cy="4.8" r="4.5" fill="url(#gl)"/></svg><div class="t" style="left:622.00px;top:64.56px;transform:scaleX(0.8669);transform-origin:0 0;">TI Resource Explorer</div><svg style="left:730px;top:66px" width="8" height="10"><path d="M0.5 0.5 H5 L7.5 3 V9.5 H0.5Z" fill="#fbfbf7" stroke="#c8a868" stroke-width="0.8"/><path d="M5 0.5 V3 H7.5" fill="none" stroke="#c8a868" stroke-width="0.6"/><text x="1.6" y="7.8" font-size="6.5" fill="#2a5ab0" font-family="Liberation Sans" font-weight="bold">c</text></svg><div class="t" style="left:740.60px;top:64.56px;transform:scaleX(0.8189);transform-origin:0 0;">PM_Sensorless.c</div><svg style="left:811.5px;top:67.5px" width="8" height="8"><path d="M1.5 1.5 L6.5 6.5 M6.5 1.5 L1.5 6.5" stroke="#9a9a9a" stroke-width="0.9"/><path d="M0.5 2.2 V0.5 H2.2 M5.8 0.5 H7.5 V2.2 M7.5 5.8 V7.5 H5.8 M2.2 7.5 H0.5 V5.8" fill="none" stroke="#b0b0b0" stroke-width="0.8"/></svg><svg style="left:1178px;top:66px" width="8" height="4"><rect x="0.5" y="0.5" width="7" height="2.6" fill="#fff" stroke="#8c8c8c" stroke-width="0.9" rx="1"/></svg><svg style="left:1193px;top:66px" width="8" height="8"><rect x="0.5" y="0.5" width="7" height="6.6" fill="#fff" stroke="#8c8c8c" stroke-width="0.9" rx="1"/><rect x="1" y="1" width="6" height="1.4" fill="#9a9a9a"/></svg><div class="a" style="left:243px;top:80px;width:8px;height:171px;background:#f8f8f8"></div><div class="a" style="left:275px;top:80px;width:1px;height:171px;background:#f6f6f6"></div><div class="a" style="left:243px;top:80px;width:942px;height:171px;overflow:hidden"><div class="m" style="left:0;width:31px;text-align:right;top:1.84px;color:#787878">19</div><div class="m" style="left:33.3px;top:1.84px"><span class="kw">#include</span> <span class="st">"PeripheralHeaderIncludes.h"</span></div><div class="m" style="left:0;width:31px;text-align:right;top:14.59px;color:#787878">20</div><div class="m" style="left:33.3px;top:14.59px"><span class="kw">#include</span> <span class="st">"PM_Sensorless-Settings.h"</span></div><div class="m" style="left:0;width:31px;text-align:right;top:27.34px;color:#787878">21</div><div class="m" style="left:33.3px;top:27.34px"><span class="kw">#include</span> <span class="st">"IQmathLib.h"</span></div><div class="m" style="left:0;width:31px;text-align:right;top:40.09px;color:#787878">22</div><div class="m" style="left:33.3px;top:40.09px"><span class="kw">#include</span> <span class="st">"PM_Sensorless.h"</span></div><div class="m" style="left:0;width:31px;text-align:right;top:52.84px;color:#787878">23</div><div class="m" style="left:33.3px;top:52.84px"><span class="kw">#include</span> <span class="st">&lt;math.h&gt;</span></div><div class="m" style="left:0;width:31px;text-align:right;top:65.59px;color:#787878">24</div><div class="m" style="left:33.3px;top:65.59px"></div><div class="m" style="left:0;width:31px;text-align:right;top:78.34px;color:#787878">25</div><div class="m" style="left:33.3px;top:78.34px"></div><div class="m" style="left:0;width:31px;text-align:right;top:91.09px;color:#787878">26</div><div class="m" style="left:33.3px;top:91.09px"><span class="cm">// Prototype statements for functions found within this file.</span></div><div class="m" style="left:0;width:31px;text-align:right;top:103.84px;color:#787878">27</div><div class="m" style="left:33.3px;top:103.84px">interrupt <span class="kw">void</span> <span class="fn">MainISR</span>(<span class="kw">void</span>);</div><div class="m" style="left:0;width:31px;text-align:right;top:116.59px;color:#787878">28</div><div class="m" style="left:33.3px;top:116.59px"><span class="kw">void</span> <span class="fn">DeviceInit</span>();</div><div class="m" style="left:0;width:31px;text-align:right;top:129.34px;color:#787878">29</div><div class="m" style="left:33.3px;top:129.34px"><span class="kw">void</span> <span class="fn">MemCopy</span>();</div><div class="m" style="left:0;width:31px;text-align:right;top:142.09px;color:#787878">30</div><div class="m" style="left:33.3px;top:142.09px"><span class="kw">void</span> <span class="fn">InitFlash</span>();</div><div class="m" style="left:0;width:31px;text-align:right;top:154.84px;color:#787878">31</div><div class="m" style="left:33.3px;top:154.84px"><span class="cm">// State Machine function prototypes</span></div><div class="m" style="left:0;width:31px;text-align:right;top:167.59px;color:#787878">32</div><div class="m" style="left:33.3px;top:167.59px"><span class="cm">//</span></div></div><div class="a" style="left:1185px;top:80px;width:12px;height:171px;background:#f0f0f0"></div><svg style="left:1187px;top:84px" width="8" height="5"><path d="M0.8 4 L4 1 L7.2 4" fill="none" stroke="#555" stroke-width="1.1"/></svg><svg style="left:1187px;top:241px" width="8" height="5"><path d="M0.8 1 L4 4 L7.2 1" fill="none" stroke="#555" stroke-width="1.1"/></svg><div class="a" style="left:1185px;top:95px;width:12px;height:13px;background:#c8c8c8"></div><div class="a" style="left:1197px;top:80px;width:10px;height:171px;background:#f6f6f6"></div><div class="a" style="left:1199px;top:106.5px;width:7px;height:4px;background:#a8d0fa;border:1px solid #4a9cf2;border-radius:1px"></div><div class="a" style="left:1199px;top:115.5px;width:7px;height:4px;background:#a8d0fa;border:1px solid #4a9cf2;border-radius:1px"></div><div class="a" style="left:1199px;top:178.5px;width:7px;height:4px;background:#a8d0fa;border:1px solid #4a9cf2;border-radius:1px"></div><div class="a" style="left:1199px;top:191.5px;width:7px;height:4px;background:#a8d0fa;border:1px solid #4a9cf2;border-radius:1px"></div><div class="a" style="left:1199px;top:207.5px;width:7px;height:4px;background:#a8d0fa;border:1px solid #4a9cf2;border-radius:1px"></div><div class="a" style="left:1199px;top:231.5px;width:7px;height:4px;background:#a8d0fa;border:1px solid #4a9cf2;border-radius:1px"></div><div class="a" style="left:243px;top:251px;width:32px;height:14px;background:#f7f7f7"></div><div class="a" style="left:275px;top:251px;width:932px;height:14px;background:#efefef"></div><svg style="left:279px;top:254px" width="5" height="8"><path d="M4 0.8 L1 4 L4 7.2" fill="none" stroke="#aaa" stroke-width="1.1"/></svg><svg style="left:1176px;top:254px" width="5" height="8"><path d="M1 0.8 L4 4 L1 7.2" fill="none" stroke="#aaa" stroke-width="1.1"/></svg><div class="a" style="left:1209px;top:61px;width:24px;height:37px;background:#f7f5ee;border:1px solid #e8e2c8;border-radius:4px"></div><div class="a" style="left:1214px;top:65px;width:13px;height:1px;background:repeating-linear-gradient(90deg,#999 0 1.5px,transparent 1.5px 3.5px)"></div><svg style="left:1215.5px;top:71.5px" width="8" height="6"><rect x="2.3" y="0.5" width="5" height="3.2" fill="#fff" stroke="#444" stroke-width="0.7"/><rect x="0.5" y="2.3" width="5" height="3.2" fill="#fff" stroke="#444" stroke-width="0.7"/></svg><svg style="left:1215.5px;top:83.5px" width="8" height="10"><rect x="0.5" y="2.5" width="7" height="6.5" fill="#dfe8f3" stroke="#5a78a8" stroke-width="0.7"/><path d="M1 0.3 H7 L4 4Z" fill="#e8b838"/><path d="M2 6 H6 M2 7.6 H6" stroke="#2a4a90" stroke-width="0.8"/></svg><div class="a" style="left:1221.5px;top:219px;width:12px;height:47px;background:#454550;border-radius:3px;border:1px solid #8a6a9a"></div><div class="a" style="left:1225px;top:223px;width:4px;height:39px;background:linear-gradient(#3a3a3a 0,#3a3a3a 35%,#a080a8 45%,#b09090 65%,#c0b070 100%)"></div><div class="a" style="left:1225px;top:223px;width:4px;height:39px;background:repeating-linear-gradient(transparent 0 2px,rgba(60,60,60,.45) 2px 3px)"></div><div class="a" style="left:243px;top:269px;width:526px;height:370px;background:#fff;border:1px solid #e4e4e4;border-radius:3px"></div><div class="a" style="left:244px;top:270px;width:524px;height:17px;background:#f0f0f0;border-radius:2px 2px 0 0"></div><div class="a" style="left:244px;top:270px;width:74px;height:17px;background:#fff;border-radius:2px 4px 0 0"></div><svg style="left:245px;top:274px" width="12" height="12"><rect x="0.5" y="5.5" width="5" height="6" fill="#e04050"/><rect x="1.8" y="7.3" width="2.4" height="2.4" fill="#fff"/><circle cx="4" cy="4" r="1.8" fill="#e02020"/><path d="M6.5 0.5 H10 L11.5 2 V11 H7" fill="#e8eef6" stroke="#7a8aa6" stroke-width="0.7"/><path d="M1 1 H5 V3" fill="none" stroke="#9ab" stroke-width="0.6"/></svg><div class="t" style="left:258.30px;top:271.86px;transform:scaleX(0.9831);transform-origin:0 0;">Problems</div><svg style="left:306.5px;top:275.5px" width="8" height="8"><path d="M1.5 1.5 L6.5 6.5 M6.5 1.5 L1.5 6.5" stroke="#9a9a9a" stroke-width="0.9"/><path d="M0.5 2.2 V0.5 H2.2 M5.8 0.5 H7.5 V2.2 M7.5 5.8 V7.5 H5.8 M2.2 7.5 H0.5 V5.8" fill="none" stroke="#b0b0b0" stroke-width="0.8"/></svg><svg style="left:322px;top:273px" width="8" height="11"><circle cx="4" cy="4" r="3.3" fill="#f8e070" stroke="#d0a020" stroke-width="0.8"/><rect x="2.5" y="7" width="3" height="3.5" fill="#a0a0a0"/></svg><div class="t" style="left:333.50px;top:271.86px;transform:scaleX(0.9138);transform-origin:0 0;">Advice</div><svg style="left:726.8px;top:273px" width="7" height="5"><path d="M0.5 0.5 H6.5 L3.5 4Z" fill="none" stroke="#8c8c8c" stroke-width="0.9"/></svg><svg style="left:739px;top:273px" width="8" height="4"><rect x="0.5" y="0.5" width="7" height="2.6" fill="#fff" stroke="#8c8c8c" stroke-width="0.9" rx="1"/></svg><svg style="left:754px;top:273px" width="8" height="8"><rect x="0.5" y="0.5" width="7" height="6.6" fill="#fff" stroke="#8c8c8c" stroke-width="0.9" rx="1"/><rect x="1" y="1" width="6" height="1.4" fill="#9a9a9a"/></svg><div class="t" style="left:243.80px;top:286.96px;transform:scaleX(0.9871);transform-origin:0 0;">2 errors, 3 warnings, 0 others</div><div class="a" style="left:244px;top:300px;width:523px;height:1px;background:#a8a8a8"></div><div class="t" style="left:247.50px;top:302.76px;transform:scaleX(1.0225);transform-origin:0 0;">Description</div><div class="a" style="left:244px;top:301px;width:523px;height:325px;overflow:hidden"><div class="a" style="left:0;top:31.20px;width:524px;height:1px;background:#ebebeb"></div><div class="a" style="left:0;top:45.92px;width:524px;height:1px;background:#ebebeb"></div><div class="a" style="left:0;top:60.64px;width:524px;height:1px;background:#ebebeb"></div><div class="a" style="left:0;top:75.36px;width:524px;height:1px;background:#ebebeb"></div><div class="a" style="left:0;top:90.08px;width:524px;height:1px;background:#ebebeb"></div><div class="a" style="left:0;top:104.80px;width:524px;height:1px;background:#ebebeb"></div><div class="a" style="left:0;top:119.52px;width:524px;height:1px;background:#ebebeb"></div><div class="a" style="left:0;top:134.24px;width:524px;height:1px;background:#ebebeb"></div><div class="a" style="left:0;top:148.96px;width:524px;height:1px;background:#ebebeb"></div><div class="a" style="left:0;top:163.68px;width:524px;height:1px;background:#ebebeb"></div><div class="a" style="left:0;top:178.40px;width:524px;height:1px;background:#ebebeb"></div><div class="a" style="left:0;top:193.12px;width:524px;height:1px;background:#ebebeb"></div><div class="a" style="left:0;top:207.84px;width:524px;height:1px;background:#ebebeb"></div><div class="a" style="left:0;top:222.56px;width:524px;height:1px;background:#ebebeb"></div><div class="a" style="left:0;top:237.28px;width:524px;height:1px;background:#ebebeb"></div><div class="a" style="left:0;top:252.00px;width:524px;height:1px;background:#ebebeb"></div><div class="a" style="left:0;top:266.72px;width:524px;height:1px;background:#ebebeb"></div><div class="a" style="left:0;top:281.44px;width:524px;height:1px;background:#ebebeb"></div><div class="a" style="left:0;top:296.16px;width:524px;height:1px;background:#ebebeb"></div><div class="a" style="left:0;top:310.88px;width:524px;height:1px;background:#ebebeb"></div><div class="a" style="left:0;top:325.60px;width:524px;height:1px;background:#ebebeb"></div><div class="a" style="left:0;top:340.32px;width:524px;height:1px;background:#ebebeb"></div></div><svg style="left:248px;top:322.9px" width="8" height="5"><path d="M0.8 1 L4 4 L7.2 1" fill="none" stroke="#3a3a3a" stroke-width="1.1"/></svg><svg style="left:259px;top:321.4px" width="8" height="8"><circle cx="4" cy="4" r="3.7" fill="#e03a3a"/><path d="M2.5 2.5 L5.5 5.5 M5.5 2.5 L2.5 5.5" stroke="#fff" stroke-width="1"/></svg><div class="t" style="left:271.30px;top:318.26px;transform:scaleX(0.9705);transform-origin:0 0;">Errors (2 items)</div><svg style="left:271.5px;top:336.12px" width="8" height="8"><circle cx="4" cy="4" r="3.7" fill="#e03a3a"/><path d="M2.5 2.5 L5.5 5.5 M5.5 2.5 L2.5 5.5" stroke="#fff" stroke-width="1"/></svg><div class="t" style="left:283.90px;top:332.98px;transform:scaleX(1.0039);transform-origin:0 0;">Program &quot;make&quot; not found in PATH</div><svg style="left:271.5px;top:350.84px" width="8" height="8"><circle cx="4" cy="4" r="3.7" fill="#e03a3a"/><path d="M2.5 2.5 L5.5 5.5 M5.5 2.5 L2.5 5.5" stroke="#fff" stroke-width="1"/></svg><div class="t" style="left:283.90px;top:347.70px;transform:scaleX(0.9891);transform-origin:0 0;">This project was created for a device not currently supported: TMS320C28XX.TMS320F28027. See &#x27;Help</div><svg style="left:248px;top:367.06px" width="8" height="5"><path d="M0.8 1 L4 4 L7.2 1" fill="none" stroke="#3a3a3a" stroke-width="1.1"/></svg><svg style="left:259.5px;top:365.56px" width="8" height="8"><path d="M3.8 0.6 Q4 0.3 4.2 0.6 L7.4 6.6 Q7.5 7.3 6.8 7.3 H1.2 Q0.5 7.3 0.6 6.6Z" fill="#f3c24a" stroke="#d39a2a" stroke-width="0.6"/><rect x="3.5" y="2.6" width="1" height="2.6" fill="#5a3a0a"/><rect x="3.5" y="5.7" width="1" height="0.9" fill="#5a3a0a"/></svg><div class="t" style="left:271.30px;top:362.42px;transform:scaleX(0.9805);transform-origin:0 0;">Warnings (3 items)</div><svg style="left:272.0px;top:380.28px" width="8" height="8"><path d="M3.8 0.6 Q4 0.3 4.2 0.6 L7.4 6.6 Q7.5 7.3 6.8 7.3 H1.2 Q0.5 7.3 0.6 6.6Z" fill="#f3c24a" stroke="#d39a2a" stroke-width="0.6"/><rect x="3.5" y="2.6" width="1" height="2.6" fill="#5a3a0a"/><rect x="3.5" y="5.7" width="1" height="0.9" fill="#5a3a0a"/></svg><div class="t" style="left:283.90px;top:377.14px;transform:scaleX(1.0121);transform-origin:0 0;">Invalid project path: Include path not found (\include).</div><svg style="left:272.0px;top:395.0px" width="8" height="8"><path d="M3.8 0.6 Q4 0.3 4.2 0.6 L7.4 6.6 Q7.5 7.3 6.8 7.3 H1.2 Q0.5 7.3 0.6 6.6Z" fill="#f3c24a" stroke="#d39a2a" stroke-width="0.6"/><rect x="3.5" y="2.6" width="1" height="2.6" fill="#5a3a0a"/><rect x="3.5" y="5.7" width="1" height="0.9" fill="#5a3a0a"/></svg><div class="t" style="left:283.90px;top:391.86px;transform:scaleX(1.0116);transform-origin:0 0;">Invalid project path: Include path not found (\packages\ti\xdais).</div><svg style="left:272.0px;top:409.71999999999997px" width="8" height="8"><path d="M3.8 0.6 Q4 0.3 4.2 0.6 L7.4 6.6 Q7.5 7.3 6.8 7.3 H1.2 Q0.5 7.3 0.6 6.6Z" fill="#f3c24a" stroke="#d39a2a" stroke-width="0.6"/><rect x="3.5" y="2.6" width="1" height="2.6" fill="#5a3a0a"/><rect x="3.5" y="5.7" width="1" height="0.9" fill="#5a3a0a"/></svg><div class="t" style="left:283.90px;top:406.58px;transform:scaleX(1.0174);transform-origin:0 0;">Invalid project path: Include path not found (C:\ti\ccsv5\tools\compiler\c2000_6.1.0\include).</div><div class="a" style="left:244px;top:626px;width:523px;height:12px;background:#f0f0f0"></div><div class="a" style="left:257px;top:626px;width:243px;height:12px;background:#c8c8c8"></div><svg style="left:248px;top:628px" width="5" height="8"><path d="M4 0.8 L1 4 L4 7.2" fill="none" stroke="#555" stroke-width="1.1"/></svg><svg style="left:758px;top:628px" width="5" height="8"><path d="M1 0.8 L4 4 L1 7.2" fill="none" stroke="#555" stroke-width="1.1"/></svg><div class="a" style="left:771px;top:269px;width:436px;height:370px;background:#fff;border:1px solid #e4e4e4;border-radius:3px"></div><div class="a" style="left:772px;top:270px;width:434px;height:17px;background:#f0f0f0;border-radius:2px 2px 0 0"></div><div class="a" style="left:772px;top:270px;width:68px;height:17px;background:#fff;border-radius:2px 4px 0 0"></div><svg style="left:775px;top:274px" width="10" height="10"><rect x="0.5" y="0.5" width="9" height="7" fill="#e8f0fa" stroke="#3a6ab0"/><rect x="2" y="2" width="6" height="4" fill="#6a9ad6"/><rect x="2" y="8" width="6" height="1.5" fill="#3a6ab0"/></svg><div class="t" style="left:787.50px;top:271.86px;transform:scaleX(0.9604);transform-origin:0 0;">Console</div><svg style="left:828.5px;top:275.5px" width="8" height="8"><path d="M1.5 1.5 L6.5 6.5 M6.5 1.5 L1.5 6.5" stroke="#9a9a9a" stroke-width="0.9"/><path d="M0.5 2.2 V0.5 H2.2 M5.8 0.5 H7.5 V2.2 M7.5 5.8 V7.5 H5.8 M2.2 7.5 H0.5 V5.8" fill="none" stroke="#b0b0b0" stroke-width="0.8"/></svg><svg style="left:995px;top:272px" width="10" height="10"><path d="M2.5 0.5 H6.5 V5 H9 L4.5 9.5 L0 5 H2.5Z" fill="#f8d060" stroke="#c08a20" stroke-width="0.8"/></svg><svg style="left:1009px;top:272px" width="10" height="10"><path d="M2.5 9.5 H6.5 V5 H9 L4.5 0.5 L0 5 H2.5Z" fill="#f8d060" stroke="#c08a20" stroke-width="0.8"/></svg><div class="a" style="left:1022px;top:269.5px;width:15px;height:13px;background:#c2dcf8;border:1px solid #a6cdf4"></div><svg style="left:1024px;top:271px" width="12" height="12"><path d="M1 3 L4 0.5 V2 H8 V4 H4 V5.5Z" fill="#f0c050" stroke="#b08020" stroke-width="0.7"/><path d="M10 8 L7 10.5 V9 H3 V7 H7 V5.5Z" fill="#f0c050" stroke="#b08020" stroke-width="0.7"/></svg><div class="a" style="left:1039px;top:270px;width:1px;height:13px;background:#aaa"></div><svg style="left:1044.5px;top:271.8px" width="10" height="10"><rect x="0.5" y="0.5" width="9" height="9" fill="#e6eef8" stroke="#c8b878" stroke-width="0.7"/><rect x="6.5" y="1.2" width="2.6" height="7.6" fill="#3a5a9a"/><path d="M6.5 3.5 H9 M6.5 6 H9" stroke="#dfe8f5" stroke-width="0.6"/><path d="M1 9 Q2.5 6.5 4.5 9" fill="#a8b8d8"/></svg><svg style="left:1059px;top:271.8px" width="10" height="10"><rect x="0.5" y="0.5" width="9" height="9" fill="#e6eef8" stroke="#c8b878" stroke-width="0.7"/><rect x="6.5" y="1.2" width="2.6" height="7.6" fill="#3a5a9a"/><path d="M6.5 3.5 H9 M6.5 6 H9" stroke="#dfe8f5" stroke-width="0.6"/><rect x="0" y="5.5" width="5" height="4.5" rx="1" fill="#d8a820" stroke="#a07810" stroke-width="0.5"/><path d="M1.3 5.5 V4.3 Q2.5 2.5 3.7 4.3 V5.5" fill="none" stroke="#a07810" stroke-width="0.8"/></svg><div class="a" style="left:1071px;top:269.5px;width:15px;height:13px;background:#c2dcf8;border:1px solid #a6cdf4"></div><svg style="left:1075px;top:272.5px" width="8" height="8"><path d="M1 1 V7 M2.5 1 H7 M2.5 4 H7" stroke="#90aad0" stroke-width="0.8"/></svg><svg style="left:1088.3px;top:271.5px" width="10" height="11"><path d="M0.5 0.5 H5 L7.5 3 V9.5 H0.5Z" fill="#dfe8f5" stroke="#c8b070" stroke-width="0.7"/><path d="M5 5.5 L9.5 10 M9.5 5.5 L5 10" stroke="#555" stroke-width="1.3"/></svg><div class="a" style="left:1103px;top:270px;width:1px;height:13px;background:#aaa"></div><svg style="left:1108px;top:271px" width="12" height="11"><rect x="0.5" y="3.5" width="10" height="7" fill="#dfe8f3" stroke="#3a6ab0" stroke-width="0.8"/><path d="M6 5 L11 0.5" stroke="#2a9a2a" stroke-width="2"/></svg><svg style="left:1123px;top:271px" width="11" height="11"><rect x="0.5" y="0.5" width="9" height="7" fill="#e8f0fa" stroke="#2a5aa0"/><rect x="2" y="2" width="6" height="4" fill="#5a8ad0"/><rect x="3" y="8" width="4" height="2" fill="#2a5aa0"/></svg><svg style="left:1138px;top:276px" width="6" height="4"><path d="M0 0 H6 L3 3.5Z" fill="#111"/></svg><svg style="left:1150px;top:271px" width="11" height="11"><rect x="0.5" y="2.5" width="9" height="8" fill="#fff" stroke="#5a8ac0"/><rect x="0.5" y="2.5" width="9" height="2" fill="#7aa7dc"/><circle cx="9" cy="2.5" r="2" fill="#f0c040"/></svg><svg style="left:1165px;top:276px" width="6" height="4"><path d="M0 0 H6 L3 3.5Z" fill="#111"/></svg><svg style="left:1178px;top:273px" width="8" height="4"><rect x="0.5" y="0.5" width="7" height="2.6" fill="#fff" stroke="#8c8c8c" stroke-width="0.9" rx="1"/></svg><svg style="left:1193px;top:273px" width="8" height="8"><rect x="0.5" y="0.5" width="7" height="6.6" fill="#fff" stroke="#8c8c8c" stroke-width="0.9" rx="1"/><rect x="1" y="1" width="6" height="1.4" fill="#9a9a9a"/></svg><div class="t" style="left:773.00px;top:286.86px;transform:scaleX(0.9427);transform-origin:0 0;">CDT Build Console [MyPMSM_FOC_Sensorless]</div><div class="a" style="left:773px;top:300px;width:433px;height:1px;background:#a8a8a8"></div><div class="a" style="left:773px;top:365px;width:420px;height:13px;background:#fde4de"></div><div class="m" style="left:774.00px;top:303.24px;color:#2b2bff;">15:59:09 **** Clean-only build of configuration Flash for project</div><div class="m" style="left:774.00px;top:316.02px;color:#2b2bff;">MyPMSM_FOC_Sensorless ****</div><div class="m" style="left:774.00px;top:328.80px;color:#222;">make clean</div><div class="m" style="left:774.00px;top:341.58px;color:#222;">Cannot run program &quot;make&quot;: Launching failed</div><div class="m" style="left:774.00px;top:354.36px;color:#222;"></div><div class="m" style="left:774.00px;top:367.14px;color:#222;">Error: Program &quot;make&quot; not found in PATH</div><div class="m" style="left:774.00px;top:379.92px;color:#222;">PATH=</div><div class="m" style="left:774.00px;top:392.70px;color:#222;">[D:/orange/ti/ccsv7/eclipse/jre/bin/client;D:/orange/ti/ccsv7/eclipse/jr</div><div class="m" style="left:774.00px;top:405.48px;color:#222;">e/bin;D:/orange/ti/ccsv7/eclipse/jre/lib/i386;C:\Program Files</div><div class="m" style="left:774.00px;top:418.26px;color:#222;">(x86)\Intel\iCLS Client\;C:\Program Files\Intel\iCLS</div><div class="m" style="left:774.00px;top:431.04px;color:#222;">Client\;C:\Windows\system32;C:\Windows;C:\Windows\System32\Wbem;C:\Windo</div><div class="m" style="left:774.00px;top:443.82px;color:#222;">ws\System32\WindowsPowerShell\v1.0\;C:\Program Files (x86)\NVIDIA</div><div class="m" style="left:774.00px;top:456.60px;color:#222;">Corporation\PhysX\Common;C:\Program Files (x86)\Intel\Intel(R)</div><div class="m" style="left:774.00px;top:469.38px;color:#222;">Management Engine Components\DAL;C:\Program Files\Intel\Intel(R)</div><div class="m" style="left:774.00px;top:482.16px;color:#222;">Management Engine Components\DAL;C:\Program Files (x86)\Intel\Intel(R)</div><div class="m" style="left:774.00px;top:494.94px;color:#222;">Management Engine Components\IPT;C:\Program Files\Intel\Intel(R)</div><div class="m" style="left:774.00px;top:507.72px;color:#222;">Management Engine</div><div class="m" style="left:774.00px;top:520.50px;color:#222;">Components\IPT;C:\Users\65459\AppData\Local\Microsoft\WindowsApps;;D:\or</div><div class="m" style="left:774.00px;top:533.28px;color:#222;">ange\ti\ccsv7\eclipse;]</div><div class="m" style="left:774.00px;top:546.06px;color:#222;"></div><div class="m" style="left:774.00px;top:558.84px;color:#2b2bff;">15:59:09 Build Finished (took 198ms)</div><div class="m" style="left:774.00px;top:571.62px;color:#222;"></div><div class="m" style="left:774.00px;top:584.40px;color:#222;"></div><div class="m" style="left:774.00px;top:597.18px;color:#222;">**** Build of configuration Flash for project MyPMSM_FOC_Sensorless ****</div><div class="m" style="left:774.00px;top:609.96px;color:#222;"></div><div class="m" style="left:774.00px;top:622.74px;color:#222;">Nothing to build for project MyPMSM_FOC_Sensorless</div><div class="a" style="left:1193px;top:301px;width:13px;height:337px;background:#f0f0f0"></div><div class="a" style="left:1194px;top:316px;width:12px;height:302px;background:#c8c8c8"></div><svg style="left:1196px;top:306px" width="8" height="5"><path d="M0.8 4 L4 1 L7.2 4" fill="none" stroke="#555" stroke-width="1.1"/></svg><svg style="left:1196px;top:628px" width="8" height="5"><path d="M0.8 1 L4 4 L7.2 1" fill="none" stroke="#555" stroke-width="1.1"/></svg><div class="a" style="left:0px;top:639px;width:1230px;height:20px;background:#e6e6e6"></div><div class="a" style="left:778.7px;top:642px;width:1px;height:15px;background:#c4c4c4"></div><div class="a" style="left:854.7px;top:642px;width:1px;height:15px;background:#c4c4c4"></div><div class="a" style="left:926.4px;top:642px;width:1px;height:15px;background:#c4c4c4"></div><div class="t" style="left:783.50px;top:641.96px;transform:scaleX(1.0308);transform-origin:0 0;">Writable</div><div class="t" style="left:860.00px;top:641.96px;transform:scaleX(0.9846);transform-origin:0 0;">Smart Insert</div><div class="t" style="left:931.80px;top:641.96px;transform:scaleX(0.9623);transform-origin:0 0;">10 : 66</div><div class="a" style="left:997px;top:643px;width:1px;height:14px;background:repeating-linear-gradient(#9a9a9a 0 1px,transparent 1px 3px)"></div><div class="a" style="left:1207px;top:643px;width:1px;height:14px;background:repeating-linear-gradient(#9a9a9a 0 1px,transparent 1px 3px)"></div><div class="a" style="left:1220px;top:643px;width:1px;height:14px;background:repeating-linear-gradient(#9a9a9a 0 1px,transparent 1px 3px)"></div></body></html>
